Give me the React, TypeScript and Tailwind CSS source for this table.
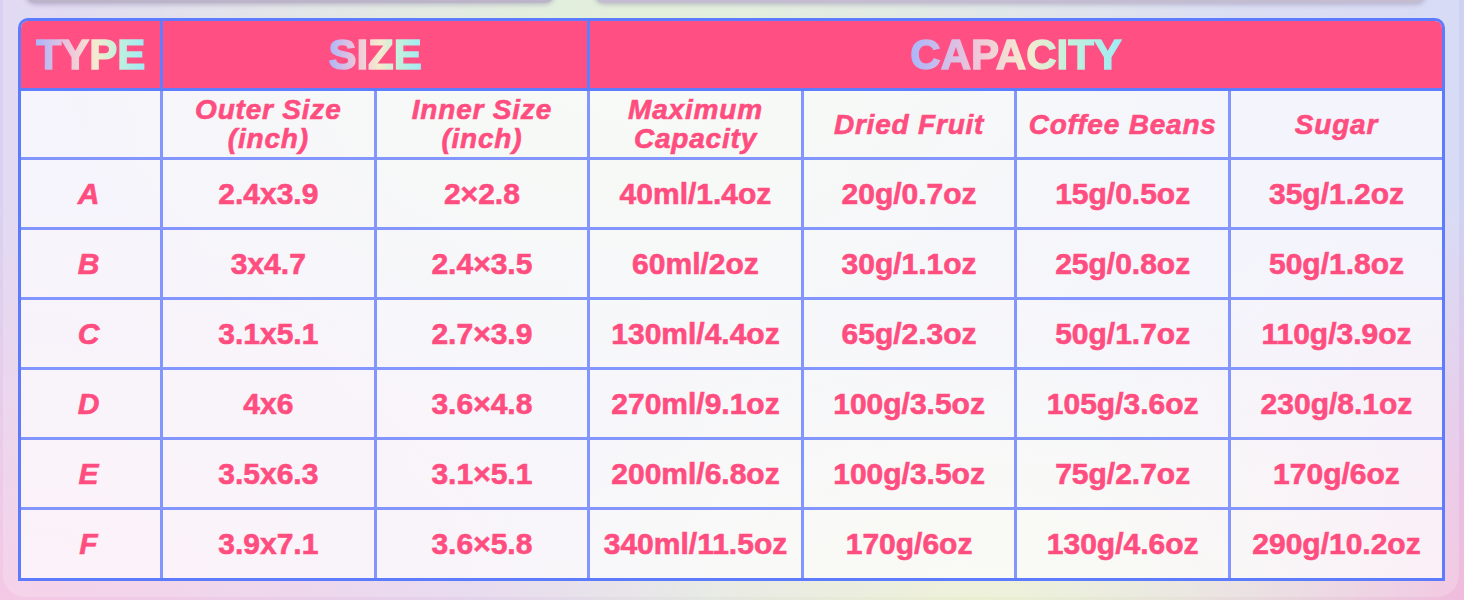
import React from "react";

const rows: string[][] = [
  ["A", "2.4x3.9", "2×2.8", "40ml/1.4oz", "20g/0.7oz", "15g/0.5oz", "35g/1.2oz"],
  ["B", "3x4.7", "2.4×3.5", "60ml/2oz", "30g/1.1oz", "25g/0.8oz", "50g/1.8oz"],
  ["C", "3.1x5.1", "2.7×3.9", "130ml/4.4oz", "65g/2.3oz", "50g/1.7oz", "110g/3.9oz"],
  ["D", "4x6", "3.6×4.8", "270ml/9.1oz", "100g/3.5oz", "105g/3.6oz", "230g/8.1oz"],
  ["E", "3.5x6.3", "3.1×5.1", "200ml/6.8oz", "100g/3.5oz", "75g/2.7oz", "170g/6oz"],
  ["F", "3.9x7.1", "3.6×5.8", "340ml/11.5oz", "170g/6oz", "130g/4.6oz", "290g/10.2oz"],
];

const subHeads: string[][] = [
  [],
  ["Outer Size", "(inch)"],
  ["Inner Size", "(inch)"],
  ["Maximum", "Capacity"],
  ["Dried Fruit"],
  ["Coffee Beans"],
  ["Sugar"],
];

function GradText({ children }: { children: React.ReactNode }) {
  return (
    <span className="bg-[linear-gradient(90deg,#aab6fa_0%,#eec4da_30%,#f4ebcf_55%,#c2f0dc_75%,#9eecf5_100%)] bg-clip-text text-transparent [-webkit-text-stroke:1.5px_transparent] [paint-order:stroke_fill]">
      {children}
    </span>
  );
}

export default function App() {
  return (
    <div className="relative h-[600px] w-[1464px] overflow-hidden font-['Liberation_Sans',Arial,sans-serif] bg-[radial-gradient(600px_420px_at_640px_0px,#ddeed2,transparent),radial-gradient(700px_420px_at_0px_620px,#f5c8e4,transparent),radial-gradient(520px_320px_at_980px_620px,#ecf0cf,transparent),radial-gradient(420px_420px_at_1464px_620px,#f2b6dc,transparent),linear-gradient(90deg,#dad1f0,#dcdcee_50%,#cfd3f3)]">
      <div className="-mt-[20px] ml-[3px] flex h-[617px] w-[1456px] flex-col rounded-b-[22px] bg-white/20">
        <div className="flex">
          <div className="ml-[22px] h-[23px] w-[530px] rounded-b-[10px] bg-[#bcb5c9] shadow-[0_2px_4px_rgba(120,110,150,0.35)]" />
          <div className="ml-[39px] h-[23px] w-[832px] rounded-b-[10px] bg-[#c4bcd0] shadow-[0_2px_4px_rgba(120,110,150,0.35)]" />
        </div>
        <div className="ml-[15px] mt-[15px] w-[1427px] overflow-hidden rounded-t-[10px] border-[3px] border-[#5c7bff]">
          <div className="grid grid-cols-[142px_repeat(5,213.6px)_1fr]">
            {/* Header row */}
            <div className="flex h-[70px] items-center justify-center border-b-[3px] border-r-[3px] border-[#5f7eff] bg-[#ff4f83] text-[42px] font-bold leading-none">
              <GradText>TYPE</GradText>
            </div>
            <div className="col-span-2 flex h-[70px] items-center justify-center border-b-[3px] border-r-[3px] border-[#5f7eff] bg-[#ff4f83] text-[42px] font-bold leading-none">
              <GradText>SIZE</GradText>
            </div>
            <div className="col-span-4 flex h-[70px] items-center justify-center border-b-[3px] border-[#5f7eff] bg-[#ff4f83] text-[42px] font-bold leading-none">
              <GradText>CAPACITY</GradText>
            </div>

            {/* Sub header */}
            {subHeads.map((lines, i) => (
              <div
                key={"s" + i}
                className={`flex h-[69px] flex-col items-center justify-center border-b-[3px] border-[#8396ff] bg-white/70 text-center text-[28px] font-bold italic leading-[29px] tracking-[0.8px] text-[#ff4d80] [-webkit-text-stroke:0.6px_#ff4d80] ${
                  i < 6 ? "border-r-[3px]" : ""
                }`}
              >
                {lines.map((l) => (
                  <span key={l}>{l}</span>
                ))}
              </div>
            ))}

            {/* Data rows */}
            {rows.map((r, ri) =>
              r.map((v, ci) => (
                <div
                  key={ri + "-" + ci}
                  className={`flex items-center justify-center border-[#8396ff] bg-white/70 text-[30px] font-bold leading-none text-[#ff4d80] [-webkit-text-stroke:0.6px_#ff4d80] ${
                    ci < 6 ? "border-r-[3px]" : ""
                  } ${ri < 5 ? "h-[70px] border-b-[3px]" : "h-[68px]"} ${ci === 0 ? "italic pr-[4px]" : ""}`}
                >
                  {v}
                </div>
              ))
            )}
          </div>
        </div>
      </div>
    </div>
  );
}
